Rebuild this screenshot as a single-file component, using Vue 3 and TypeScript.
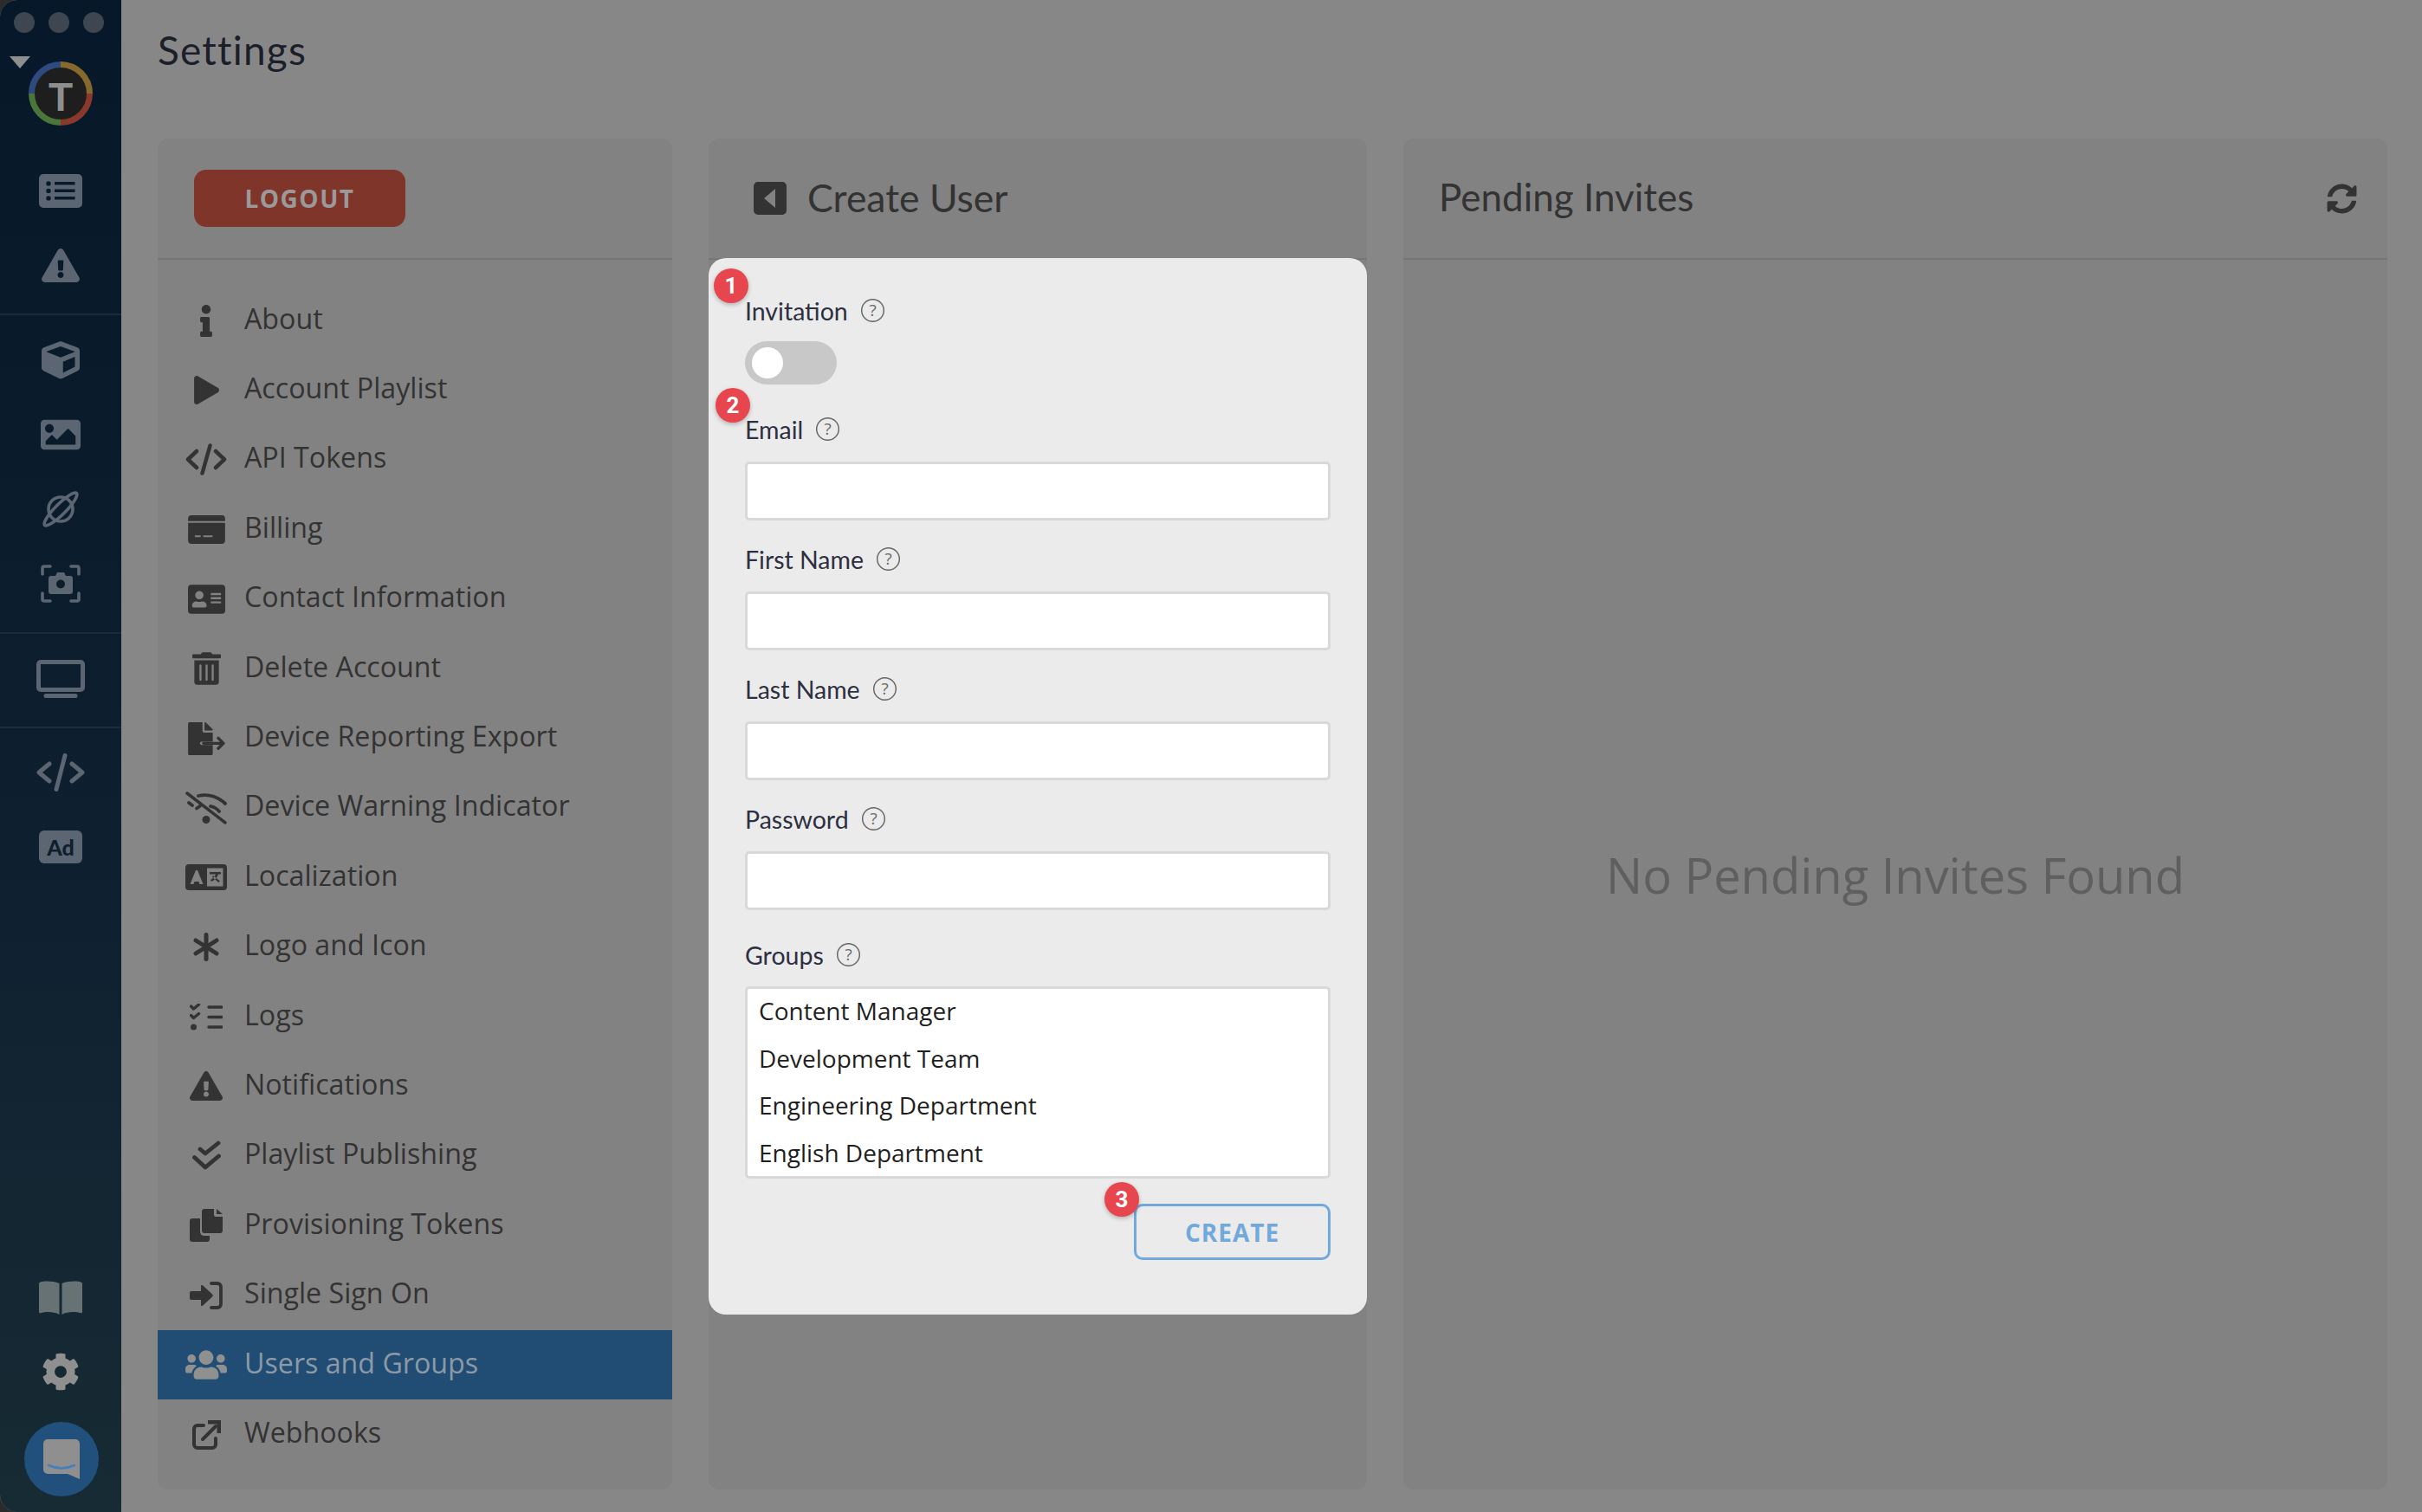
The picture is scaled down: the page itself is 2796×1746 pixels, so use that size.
<script setup lang="ts">
interface Part { d: string; s?: number; c?: string }
interface Icon { vb: string; w: number; h: number; parts: Part[] }

const triangle = 'M569.517 440.013C587.975 472.007 564.806 512 527.94 512H48.054c-36.937 0-59.999-40.055-41.577-71.987L246.423 24.035c18.467-32.009 64.72-31.951 83.154 0l239.94 416.978zM288 354c-25.405 0-46 20.595-46 46s20.595 46 46 46 46-20.595 46-46-20.595-46-46-46zm-43.673-165.346l7.418 136c.347 6.364 5.609 11.346 11.982 11.346h48.546c6.373 0 11.635-4.982 11.982-11.346l7.418-136c.375-6.874-5.098-12.654-11.982-12.654h-63.383c-6.884 0-12.356 5.78-11.981 12.654z'

const menu: { label: string; active?: boolean; icon: Icon }[] = [
  { label: 'About', icon: { vb: '0 0 192 512', w: 14, h: 37, parts: [{ d: 'M20 424.229h20V279.771H20c-11.046 0-20-8.954-20-20V212c0-11.046 8.954-20 20-20h112c11.046 0 20 8.954 20 20v212.229h20c11.046 0 20 8.954 20 20V492c0 11.046-8.954 20-20 20H20c-11.046 0-20-8.954-20-20v-47.771c0-11.046 8.954-20 20-20zM96 0C56.235 0 24 32.235 24 72s32.235 72 72 72 72-32.235 72-72S135.764 0 96 0z' }] } },
  { label: 'Account Playlist', icon: { vb: '0 0 448 512', w: 29, h: 33, parts: [{ d: 'M424.4 214.7L72.4 6.6C43.8-10.3 0 6.1 0 47.9V464c0 37.5 40.7 60.1 72.4 41.3l352-208c31.4-18.5 31.5-64.1 0-82.6z' }] } },
  { label: 'API Tokens', icon: { vb: '0 0 48 37', w: 48, h: 37, parts: [{ d: 'M13 9L3 18.5 13 28M35 9l10 9.5L35 28M28.500 2.500L19.500 34.500', s: 4.500 }] } },
  { label: 'Billing', icon: { vb: '0 0 44 34', w: 43, h: 33, parts: [{ d: 'M4 0h36a4 4 0 0 1 4 4v3H0V4a4 4 0 0 1 4-4z' }, { d: 'M0 9h44v21a4 4 0 0 1-4 4H4a4 4 0 0 1-4-4zM8 24v2h7v-2zM18 24v2h11v-2z' }] } },
  { label: 'Contact Information', icon: { vb: '0 32 576 448', w: 43, h: 34, parts: [{ d: 'M528 32H48C21.5 32 0 53.5 0 80v352c0 26.5 21.5 48 48 48h480c26.5 0 48-21.5 48-48V80c0-26.5-21.5-48-48-48zm-352 96c35.3 0 64 28.7 64 64s-28.7 64-64 64-64-28.7-64-64 28.7-64 64-64zm112 236.8c0 10.6-10 19.2-22.4 19.2H86.4C74 384 64 375.4 64 364.8v-19.2c0-31.8 30.1-57.6 67.2-57.6h5c12.3 5.1 25.7 8 39.8 8s27.6-2.9 39.8-8h5c37.1 0 67.2 25.8 67.2 57.6v19.2zM512 312c0 4.4-3.6 8-8 8H360c-4.4 0-8-3.6-8-8v-16c0-4.4 3.6-8 8-8h144c4.4 0 8 3.6 8 8v16zm0-64c0 4.4-3.6 8-8 8H360c-4.4 0-8-3.6-8-8v-16c0-4.4 3.6-8 8-8h144c4.4 0 8 3.6 8 8v16zm0-64c0 4.4-3.6 8-8 8H360c-4.4 0-8-3.6-8-8v-16c0-4.4 3.6-8 8-8h144c4.4 0 8 3.6 8 8v16z' }] } },
  { label: 'Delete Account', icon: { vb: '0 0 448 512', w: 33, h: 38, parts: [{ d: 'M32 464a48 48 0 0 0 48 48h288a48 48 0 0 0 48-48V128H32zm272-256a16 16 0 0 1 32 0v224a16 16 0 0 1-32 0zm-96 0a16 16 0 0 1 32 0v224a16 16 0 0 1-32 0zm-96 0a16 16 0 0 1 32 0v224a16 16 0 0 1-32 0zM432 32H312l-9.4-18.7A24 24 0 0 0 281.1 0H166.8a23.72 23.72 0 0 0-21.4 13.3L136 32H16A16 16 0 0 0 0 48v32a16 16 0 0 0 16 16h416a16 16 0 0 0 16-16V48a16 16 0 0 0-16-16z' }] } },
  { label: 'Device Reporting Export', icon: { vb: '0 0 576 512', w: 43, h: 38, parts: [{ d: 'M384 121.9c0-6.3-2.500-12.400-7-16.900L279.100 7c-4.500-4.500-10.600-7-17-7H256v128h128zM384 352v136c0 13.300-10.700 24-24 24H24c-13.300 0-24-10.700-24-24V24C0 10.700 10.700 0 24 0h200v136c0 13.200 10.800 24 24 24h136v144H208c-13 0-24 10.700-24 24s11 24 24 24z' }, { d: 'M240 328H550M470 248l80 80-80 80', s: 46 }] } },
  { label: 'Device Warning Indicator', icon: { vb: '0 0 48 38', w: 48, h: 38, parts: [{ d: 'M2 2L46 36', s: 3.500 }, { d: 'M15 5Q32 1 46 14M29 17Q35 18 39 23', s: 3.800 }, { d: 'M4 13l4 3M13 19.500l4-2.800', s: 3.800 }, { d: 'M24 28a4.500 4.500 0 1 1 0 9a4.500 4.500 0 1 1 0-9z' }] } },
  { label: 'Localization', icon: { vb: '0 0 48 30', w: 48, h: 30, parts: [{ d: 'M4 0h40a4 4 0 0 1 4 4v22a4 4 0 0 1-4 4H4a4 4 0 0 1-4-4V4a4 4 0 0 1 4-4zM25 4.500v21h18.500v-21zM12 7L5.500 23h4l1-3h5l1 3h4L14 7z' }, { d: 'M28 9h13v2.500h-3c-1 4-4 6.500-8 8.500l-1-2c3-1.500 5-3.500 6-6.500h-7zM32 13l8 6.500-1.500 1.500-7.500-6z' }] } },
  { label: 'Logo and Icon', icon: { vb: '0 0 30 33', w: 30, h: 33, parts: [{ d: 'M15 2.500V30.500M3 9l24 15M3 24L27 9', s: 5 }] } },
  { label: 'Logs', icon: { vb: '0 0 38 31', w: 38, h: 31, parts: [{ d: 'M22 4H37M22 15.500H37M22 27H37', s: 3.500 }, { d: 'M1.500 3l3 3 6-5M1.500 13.500l3 3 6-5', s: 3.400 }, { d: 'M4.500 23.500a3.500 3.500 0 1 1 0 7a3.500 3.500 0 1 1 0-7z' }] } },
  { label: 'Notifications', icon: { vb: '0 0 576 512', w: 38, h: 34, parts: [{ d: triangle }] } },
  { label: 'Playlist Publishing', icon: { vb: '0 0 33 35', w: 33, h: 35, parts: [{ d: 'M9 10l6 5L30 3M2.500 19.500L15 31 30.500 18', s: 4.800 }] } },
  { label: 'Provisioning Tokens', icon: { vb: '0 0 38 38', w: 38, h: 38, parts: [{ d: 'M3 11h9v15c0 3 2 5 5 5h6v4a3 3 0 0 1-3 3H3a3 3 0 0 1-3-3V14a3 3 0 0 1 3-3z' }, { d: 'M17 0h11v7a2 2 0 0 0 2 2h8v16a3 3 0 0 1-3 3H17a3 3 0 0 1-3-3V3a3 3 0 0 1 3-3z' }, { d: 'M31 0l7 6h-7z' }] } },
  { label: 'Single Sign On', icon: { vb: '0 0 38 32', w: 38, h: 32, parts: [{ d: 'M2 11h11V5c0-1 1-1.500 2-.7l11 10.200c1 1 1 2 0 3L15 27.700c-1 .8-2 .3-2-.7v-6H2a2 2 0 0 1-2-2v-6a2 2 0 0 1 2-2z' }, { d: 'M25 2h7a4 4 0 0 1 4 4v20a4 4 0 0 1-4 4h-7', s: 3.800 }] } },
  { label: 'Users and Groups', active: true, icon: { vb: '0 32 640 448', w: 48, h: 36, parts: [{ d: 'M96 224c35.300 0 64-28.700 64-64s-28.700-64-64-64-64 28.700-64 64 28.700 64 64 64zm448 0c35.300 0 64-28.700 64-64s-28.700-64-64-64-64 28.700-64 64 28.700 64 64 64zm32 32h-64c-17.600 0-33.500 7.100-45.100 18.600 40.300 22.100 68.900 62 75.100 109.400h66c17.700 0 32-14.300 32-32v-32c0-35.300-28.700-64-64-64zm-256 0c61.900 0 112-50.100 112-112S381.900 32 320 32 208 82.100 208 144s50.100 112 112 112zm76.800 32h-8.300c-20.800 10-43.900 16-68.500 16s-47.600-6-68.500-16h-8.300C179.600 288 128 339.600 128 403.200V432c0 26.500 21.500 48 48 48h288c26.500 0 48-21.500 48-48v-28.800c0-63.600-51.600-115.200-115.200-115.200zm-223.700-13.400C161.500 263.100 145.600 256 128 256H64c-35.300 0-64 28.700-64 64v32c0 17.700 14.300 32 32 32h65.900c6.300-47.400 34.900-87.300 75.200-109.400z' }] } },
  { label: 'Webhooks', icon: { vb: '0 0 33 35', w: 33, h: 35, parts: [{ d: 'M13 7H6a4 4 0 0 0-4 4v18a4 4 0 0 0 4 4h17a4 4 0 0 0 4-4v-7M12 23L27 8', s: 4 }, { d: 'M18 1h15v15h-4.500V5.500H18z' }] } },
]

const railTop: Icon[] = [
  { vb: '0 0 50 39', w: 50, h: 39, parts: [{ d: 'M5 0h40a5 5 0 0 1 5 5v29a5 5 0 0 1-5 5H5a5 5 0 0 1-5-5V5a5 5 0 0 1 5-5zM11 8.200a2.700 2.700 0 1 0 0 5.400a2.700 2.700 0 1 0 0-5.400zM11 16.700a2.700 2.700 0 1 0 0 5.400a2.700 2.700 0 1 0 0-5.400zM11 25.200a2.700 2.700 0 1 0 0 5.400a2.700 2.700 0 1 0 0-5.400zM18 9v3.600h23.500V9zM18 17.500v3.600h23.500v-3.600zM18 26v3.600h23.500V26z' }] },
  { vb: '0 0 576 512', w: 46, h: 39, parts: [{ d: triangle }] },
]
const railAssets: Icon[] = [
  { vb: '0 0 512 512', w: 46, h: 44, parts: [{ d: 'M239.100 6.300l-208 78c-18.700 7-31.100 25-31.100 45v225.100c0 18.200 10.300 34.800 26.500 42.900l208 104c13.500 6.800 29.400 6.800 42.900 0l208-104c16.300-8.100 26.500-24.800 26.500-42.900V129.300c0-20-12.400-37.900-31.100-44.900l-208-78C262 2.200 250 2.200 239.100 6.300zM256 68.400l192 72v1.100l-192 78-192-78v-1.100l192-72zm32 356V275.500l160-65v133.900l-160 80z' }] },
  { vb: '0 64 512 384', w: 46, h: 38, parts: [{ d: 'M464 448H48c-26.510 0-48-21.490-48-48V112c0-26.510 21.490-48 48-48h416c26.510 0 48 21.490 48 48v288c0 26.510-21.490 48-48 48zM112 120c-30.928 0-56 25.072-56 56s25.072 56 56 56 56-25.072 56-56-25.072-56-56-56zM64 384h384V272l-87.515-87.515c-4.686-4.686-12.284-4.686-16.971 0L208 320l-55.515-55.515c-4.686-4.686-12.284-4.686-16.971 0L64 336v48z' }] },
  { vb: '0 0 46 44', w: 46, h: 44, parts: [{ d: 'M37 22a14 14 0 1 1-28 0a14 14 0 1 1 28 0zM4.600 40.400A26 6 -45 1 1 41.400 3.600A26 6 -45 1 1 4.600 40.400z', s: 3.600 }] },
  { vb: '0 0 46 44', w: 46, h: 44, parts: [{ d: 'M2 11V4a2 2 0 0 1 2-2h7M35 2h7a2 2 0 0 1 2 2v7M44 33v7a2 2 0 0 1-2 2h-7M11 42H4a2 2 0 0 1-2-2v-7', s: 3.600 }, { d: 'M12 13h5l2-4h8l2 4h5a3 3 0 0 1 3 3v15a3 3 0 0 1-3 3H12a3 3 0 0 1-3-3V16a3 3 0 0 1 3-3zM23 17.500a5 5 0 1 0 0 10a5 5 0 1 0 0-10z' }] },
]
const railDesktop: Icon = { vb: '0 0 56 44', w: 56, h: 44, parts: [{ d: 'M5 2.500h46a2.500 2.500 0 0 1 2.500 2.500v27a2.500 2.500 0 0 1-2.500 2.500H5a2.500 2.500 0 0 1-2.500-2.500V5A2.500 2.500 0 0 1 5 2.500zM11 41.500h34', s: 5 }] }
const railCode: Icon = { vb: '0 0 56 44', w: 56, h: 44, parts: [{ d: 'M15 12L3 22l12 10M41 12l12 10-12 10M33 2.500L23 41.500', s: 5 }] }
const railBook: Icon = { vb: '0 0 50 39', w: 50, h: 39, parts: [{ d: 'M23.500 3C16 0 6 0 1.500 1.500 .5 2 0 2.500 0 3.500V36c0 1 1 1.500 2 1.200C8 35.500 17 35.500 23.500 39zM26.500 3C34 0 44 0 48.500 1.500c1 .5 1.500 1 1.500 2V36c0 1-1 1.500-2 1.200C42 35.500 33 35.500 26.500 39z' }] }
const railCog: Icon = { vb: '0 0 512 512', w: 44, h: 44, parts: [{ d: 'M487.400 315.700l-42.600-24.600c4.300-23.200 4.300-47 0-70.200l42.600-24.600c4.900-2.800 7.100-8.600 5.500-14-11.100-35.600-30-67.800-54.700-94.600-3.800-4.100-10-5.100-14.800-2.300L380.800 110c-17.900-15.400-38.500-27.300-60.800-35.100V25.800c0-5.600-3.900-10.500-9.400-11.700-36.700-8.200-74.300-7.800-109.200 0-5.500 1.200-9.400 6.100-9.400 11.700V75c-22.200 7.900-42.800 19.800-60.800 35.100L88.700 85.500c-4.900-2.800-11-1.900-14.800 2.300-24.700 26.700-43.600 58.900-54.700 94.600-1.700 5.400.6 11.200 5.500 14L67.300 221c-4.300 23.200-4.300 47 0 70.200l-42.600 24.600c-4.900 2.800-7.100 8.600-5.500 14 11.100 35.600 30 67.800 54.700 94.600 3.800 4.100 10 5.100 14.800 2.300l42.600-24.600c17.900 15.400 38.500 27.300 60.800 35.100v49.200c0 5.600 3.900 10.500 9.400 11.700 36.700 8.200 74.300 7.800 109.200 0 5.500-1.200 9.400-6.100 9.400-11.700v-49.200c22.200-7.900 42.800-19.800 60.800-35.100l42.600 24.600c4.900 2.800 11 1.900 14.800-2.300 24.700-26.700 43.600-58.900 54.700-94.600 1.500-5.500-.7-11.300-5.600-14.100zM256 336c-44.100 0-80-35.900-80-80s35.900-80 80-80 80 35.900 80 80-35.900 80-80 80z' }] }

const refresh = 'M370.720 133.280C339.458 104.008 298.888 87.962 255.848 88c-77.458.068-144.328 53.178-162.791 126.850-1.344 5.363-6.122 9.150-11.651 9.150H24.103c-7.498 0-13.194-6.807-11.807-14.176C33.933 94.924 134.813 8 256 8c66.448 0 126.791 26.136 171.315 68.685L463.030 40.970C478.149 25.851 504 36.559 504 57.941V192c0 13.255-10.745 24-24 24H345.941c-21.382 0-32.090-25.851-16.971-40.971l41.750-41.749zM32 296h134.059c21.382 0 32.090 25.851 16.971 40.971l-41.750 41.750c31.262 29.273 71.835 45.319 114.876 45.280 77.418-.07 144.315-53.144 162.787-126.849 1.344-5.363 6.122-9.150 11.651-9.150h57.304c7.498 0 13.194 6.807 11.807 14.176C478.067 417.076 377.187 504 256 504c-66.448 0-126.791-26.136-171.315-68.685L48.970 471.030C33.851 486.149 8 475.441 8 454.059V320c0-13.255 10.745-24 24-24z'

const inputs = ['Email', 'First Name', 'Last Name', 'Password']
const groups = ['Content Manager', 'Development Team', 'Engineering Department', 'English Department']

const partAttrs = (p: Part) =>
  p.s
    ? { d: p.d, fill: 'none', stroke: p.c ?? 'currentColor', 'stroke-width': p.s, 'stroke-linecap': 'round', 'stroke-linejoin': 'round' }
    : { d: p.d, fill: p.c ?? 'currentColor', 'fill-rule': 'evenodd' as const }
</script>

<template>
  <div class="app">
    <aside class="rail">
      <section class="rail-sec sec-top">
        <div class="lights"><i></i><i></i><i></i></div>
        <div class="logo-wrap">
          <span class="caret"></span>
          <svg class="logo" width="74" height="74" viewBox="0 0 74 74">
            <circle cx="37" cy="37" r="36" fill="#1e1e1e" />
            <path d="M37 3.500A33.500 33.500 0 0 0 3.500 37" fill="none" stroke="#2f4a7e" stroke-width="7" />
            <path d="M37 3.500A33.500 33.500 0 0 1 70.500 37" fill="none" stroke="#866a2d" stroke-width="7" />
            <path d="M70.500 37A33.500 33.500 0 0 1 37 70.500" fill="none" stroke="#8a382c" stroke-width="7" />
            <path d="M37 70.500A33.500 33.500 0 0 1 3.500 37" fill="none" stroke="#4a763a" stroke-width="7" />
            <text x="37" y="57" text-anchor="middle" class="logo-t">T</text>
          </svg>
        </div>
        <div v-for="(ic, i) in railTop" :key="i" class="rail-btn">
          <svg :viewBox="ic.vb" :width="ic.w" :height="ic.h"><path v-for="(p, j) in ic.parts" :key="j" v-bind="partAttrs(p)" /></svg>
        </div>
      </section>
      <section class="rail-sec sec-assets">
        <div v-for="(ic, i) in railAssets" :key="i" class="rail-btn">
          <svg :viewBox="ic.vb" :width="ic.w" :height="ic.h"><path v-for="(p, j) in ic.parts" :key="j" v-bind="partAttrs(p)" /></svg>
        </div>
      </section>
      <section class="rail-sec sec-desktop">
        <svg :viewBox="railDesktop.vb" :width="railDesktop.w" :height="railDesktop.h"><path v-for="(p, j) in railDesktop.parts" :key="j" v-bind="partAttrs(p)" /></svg>
      </section>
      <section class="sec-dev">
        <div class="rail-btn">
          <svg :viewBox="railCode.vb" :width="railCode.w" :height="railCode.h"><path v-for="(p, j) in railCode.parts" :key="j" v-bind="partAttrs(p)" /></svg>
        </div>
        <div class="rail-btn"><span class="ad">Ad</span></div>
      </section>
      <section class="sec-bottom">
        <div class="rail-btn book">
          <svg :viewBox="railBook.vb" :width="railBook.w" :height="railBook.h"><path v-for="(p, j) in railBook.parts" :key="j" v-bind="partAttrs(p)" /></svg>
        </div>
        <div class="rail-btn cog">
          <svg :viewBox="railCog.vb" :width="railCog.w" :height="railCog.h"><path v-for="(p, j) in railCog.parts" :key="j" v-bind="partAttrs(p)" /></svg>
        </div>
        <div class="chat">
          <svg viewBox="0 0 42 46" width="42" height="46">
            <path d="M5 0h32a5 5 0 0 1 5 5v41l-14-6H5a5 5 0 0 1-5-5V5a5 5 0 0 1 5-5z" fill="#8f8f8f" />
            <path d="M6 30Q21 37 36 30" fill="none" stroke="#3f80bd" stroke-width="2.500" stroke-linecap="round" />
          </svg>
        </div>
      </section>
    </aside>

    <main class="main">
      <h1 class="title">Settings</h1>
      <div class="columns">
        <section class="panel">
          <header class="panel-head">
            <button class="logout" type="button">LOGOUT</button>
          </header>
          <nav class="menu">
            <a v-for="m in menu" :key="m.label" class="item" :class="{ active: m.active }">
              <span class="item-icon">
                <svg :viewBox="m.icon.vb" :width="m.icon.w" :height="m.icon.h"><path v-for="(p, j) in m.icon.parts" :key="j" v-bind="partAttrs(p)" /></svg>
              </span>
              <span class="item-label">{{ m.label }}</span>
            </a>
          </nav>
        </section>

        <section class="panel">
          <header class="panel-head">
            <svg class="back" viewBox="0 0 38 38" width="38" height="38">
              <path d="M5 0h28a5 5 0 0 1 5 5v28a5 5 0 0 1-5 5H5a5 5 0 0 1-5-5V5a5 5 0 0 1 5-5zM25 8L12 19l13 11z" fill="#333" fill-rule="evenodd" />
            </svg>
            <h2 class="panel-title">Create User</h2>
          </header>
          <form class="card" @submit.prevent>
            <span class="badge b1">1</span>
            <span class="badge b2">2</span>
            <span class="badge b3">3</span>

            <div class="field-label">
              <span>Invitation</span>
              <svg class="help" viewBox="0 0 27 27" width="27" height="27"><circle cx="13.500" cy="13.500" r="12.800" fill="none" stroke="#6a6a6a" stroke-width="1.500" /><text x="13.500" y="20" text-anchor="middle" class="help-q">?</text></svg>
            </div>
            <div class="toggle"><span class="knob"></span></div>

            <div v-for="f in inputs" :key="f" class="field">
              <div class="field-label">
                <span>{{ f }}</span>
                <svg class="help" viewBox="0 0 27 27" width="27" height="27"><circle cx="13.500" cy="13.500" r="12.800" fill="none" stroke="#6a6a6a" stroke-width="1.500" /><text x="13.500" y="20" text-anchor="middle" class="help-q">?</text></svg>
              </div>
              <input class="input" type="text" :aria-label="f" />
            </div>

            <div class="field-label groups-label">
              <span>Groups</span>
              <svg class="help" viewBox="0 0 27 27" width="27" height="27"><circle cx="13.500" cy="13.500" r="12.800" fill="none" stroke="#6a6a6a" stroke-width="1.500" /><text x="13.500" y="20" text-anchor="middle" class="help-q">?</text></svg>
            </div>
            <div class="listbox" role="listbox">
              <div v-for="g in groups" :key="g" class="option" role="option">{{ g }}</div>
            </div>
            <div class="actions">
              <button class="create" type="submit">CREATE</button>
            </div>
          </form>
        </section>

        <section class="panel">
          <header class="panel-head between">
            <h2 class="panel-title pending">Pending Invites</h2>
            <svg viewBox="0 0 512 512" width="35" height="35"><path :d="refresh" fill="#333" /></svg>
          </header>
          <div class="empty">No Pending Invites Found</div>
        </section>
      </div>
    </main>
  </div>
</template>

<style>
html, body { margin: 0; background: #2b2b2b; }
</style>

<style scoped>
.app {
  width: 2796px;
  height: 1746px;
  display: flex;
  overflow: hidden;
  background: #878787;
  font-family: "Open Sans", "Noto Sans", sans-serif;
  border-radius: 20px 0 0 20px;
}
.rail {
  width: 140px;
  flex: none;
  height: 100%;
  display: flex;
  flex-direction: column;
  color: #5c6673;
  background: linear-gradient(180deg, #07182a 0%, #0a1b2b 30%, #0f2130 60%, #172b34 100%);
}
.rail-sec { border-bottom: 2px solid #1b2b3b; }
.rail-btn { height: 86px; display: flex; align-items: center; justify-content: center; }
.sec-top { padding: 14px 0 13px; height: 364px; box-sizing: border-box; }
.lights { display: flex; gap: 16px; padding-left: 16px; height: 24px; }
.lights i { width: 24px; height: 24px; border-radius: 50%; background: #3d4651; }
.logo-wrap { position: relative; margin: 33px 0 32px; height: 74px; display: flex; justify-content: center; }
.caret {
  position: absolute;
  left: 11px;
  top: -6px;
  width: 0;
  height: 0;
  border-left: 12px solid transparent;
  border-right: 12px solid transparent;
  border-top: 14px solid #8f8f8f;
}
.logo-t { font-family: "Liberation Sans", sans-serif; font-weight: 700; font-size: 46px; fill: #8e8e8e; }
.sec-assets { padding: 9px 0 13px; }
.sec-desktop { height: 109px; padding-bottom: 4px; box-sizing: border-box; display: flex; align-items: center; justify-content: center; }
.sec-dev { padding-top: 8px; }
.ad {
  width: 50px;
  height: 38px;
  border-radius: 6px;
  background: #5c6673;
  color: #0e1f2e;
  font-family: "Lato", sans-serif;
  font-weight: 900;
  font-size: 25px;
  line-height: 38px;
  text-align: center;
}
.sec-bottom { margin-top: auto; padding-bottom: 18px; }
.book { color: #667274; }
.cog { color: #8f8f8f; }
.chat {
  width: 86px;
  height: 86px;
  margin: 15px 0 0 28px;
  border-radius: 50%;
  background: #21507c;
  display: flex;
  align-items: center;
  justify-content: center;
}

.main { flex: 1; min-width: 0; display: flex; flex-direction: column; padding: 0 40px 26px 42px; }
.title {
  height: 160px;
  flex: none;
  margin: 0;
  padding-top: 28px;
  box-sizing: border-box;
  font-family: "Lato", sans-serif;
  font-weight: 400;
  font-size: 46px;
  letter-spacing: 1.200px;
  line-height: 60px;
  color: #1c1f2a;
}
.columns { flex: 1; min-height: 0; display: grid; grid-template-columns: 594px 760px 1fr; gap: 42px; }
.panel { background: #828282; border-radius: 12px; display: flex; flex-direction: column; min-width: 0; }
.panel-head {
  height: 140px;
  flex: none;
  box-sizing: border-box;
  border-bottom: 2px solid #757575;
  padding: 0 42px;
  display: flex;
  align-items: center;
  gap: 24px;
}
.between { justify-content: space-between; padding-right: 35px; }
.back { margin-left: 10px; }
.panel-title {
  margin: 0 0 4px;
  font-family: "Lato", sans-serif;
  font-weight: 400;
  font-size: 44.500px;
  color: #333;
}
.pending { font-size: 44px; margin-left: -1px; }
.logout {
  width: 244px;
  height: 66px;
  border: 0;
  border-radius: 14px;
  background: #80352b;
  color: #9a9a9a;
  font-family: "Open Sans", sans-serif;
  font-weight: 700;
  font-size: 28px;
  letter-spacing: 1.500px;
}
.menu { padding-top: 30px; }
.item { height: 80.400px; display: flex; align-items: center; color: #333; }
.item-icon { width: 80px; margin-left: 16px; margin-right: 4px; display: flex; justify-content: center; align-items: center; flex: none; }
.item-label { font-size: 32.200px; padding-bottom: 6px; }
.active { background: #214d74; color: #8b9aa6; }
.active .item-icon { color: #8f9090; }

.card {
  position: relative;
  margin-top: -2px;
  height: 1220px;
  box-sizing: border-box;
  padding: 44px 42px 0 42px;
  background: #ebebeb;
  border-radius: 20px;
  display: flex;
  flex-direction: column;
}
.badge {
  position: absolute;
  width: 40px;
  height: 40px;
  border-radius: 50%;
  background: #e8464e;
  color: #fff;
  font-family: "Roboto", sans-serif;
  font-weight: 700;
  font-size: 26px;
  line-height: 40px;
  text-align: center;
  box-shadow: 0 2px 5px rgba(0, 0, 0, .25);
}
.b1 { left: 6px; top: 12px; }
.b2 { left: 8px; top: 150px; }
.b3 { left: 457px; top: 1067px; }
.field-label {
  height: 36px;
  box-sizing: border-box;
  padding-bottom: 3px;
  display: flex;
  align-items: center;
  gap: 15px;
  font-family: "Lato", sans-serif;
  font-size: 28.500px;
  color: #2d3041;
}
.help-q { font-family: "Open Sans", sans-serif; font-size: 19px; fill: #6a6a6a; }
.toggle { width: 106px; height: 50px; margin: 16px 0 35px; border-radius: 25px; background: #c8c8c8; display: flex; align-items: center; padding-left: 8px; box-sizing: border-box; }
.knob { width: 36px; height: 36px; border-radius: 50%; background: #fff; }
.field { margin-bottom: 28px; display: flex; flex-direction: column; }
.input {
  margin-top: 18px;
  height: 68px;
  box-sizing: border-box;
  width: 100%;
  border: 3px solid #d9d9d9;
  border-radius: 5px;
  background: #fff;
  padding: 0 12px;
  outline: none;
}
.groups-label { margin-top: 7px; }
.listbox {
  margin-top: 17px;
  height: 222px;
  box-sizing: border-box;
  overflow: hidden;
  border: 3px solid #d9d9d9;
  border-radius: 5px;
  background: #fff;
  padding-left: 13px;
}
.option { height: 54.500px; line-height: 54.500px; font-size: 28px; color: #1f1f1f; }
.option:first-child { margin-top: -2px; }
.actions { display: flex; justify-content: flex-end; margin-top: 29px; }
.create {
  width: 227px;
  height: 65px;
  background: transparent;
  border: 3px solid #71a9dc;
  border-radius: 10px;
  color: #71a9dc;
  font-family: "Open Sans", sans-serif;
  font-weight: 700;
  font-size: 28px;
  letter-spacing: 1px;
}
.empty {
  flex: 1;
  display: flex;
  align-items: center;
  justify-content: center;
  font-size: 56px;
  color: #5f5f5f;
}
</style>
